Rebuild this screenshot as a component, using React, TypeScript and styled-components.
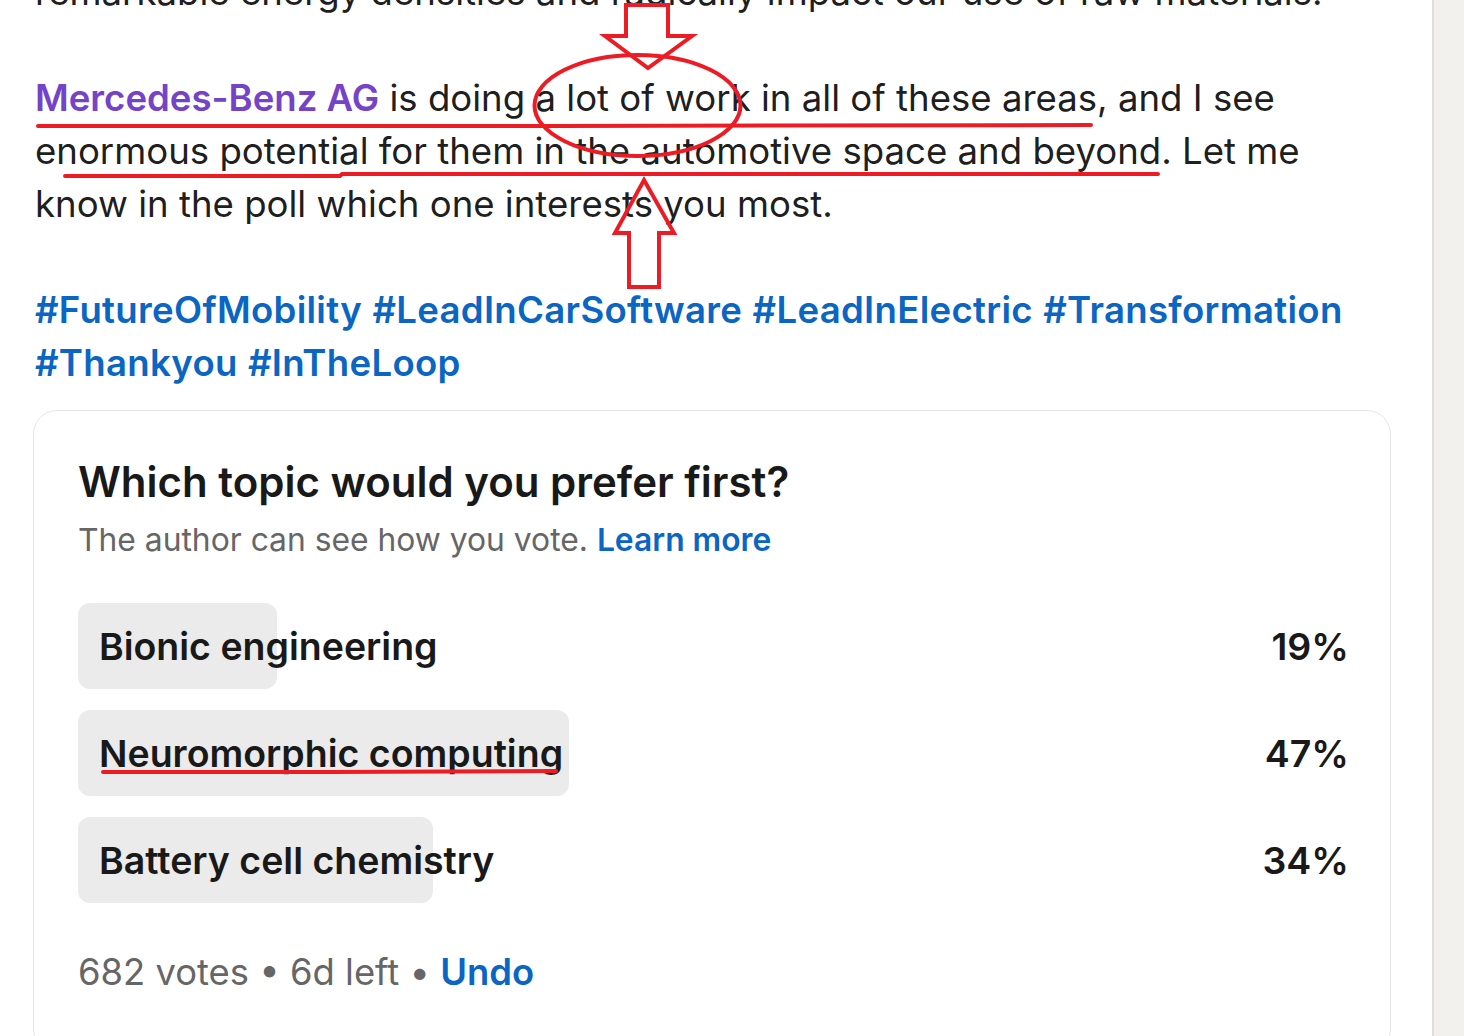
import React from "react";
import styled, { createGlobalStyle } from "styled-components";

const GlobalStyle = createGlobalStyle`
  html, body { margin: 0; padding: 0; background: #ffffff; }
  body { font-family: Inter, "Noto Sans", sans-serif; overflow: hidden; }
  * { box-sizing: border-box; }
`;

const Page = styled.div`
  position: relative;
  display: flex;
  width: 1464px;
  height: 1036px;
  overflow: hidden;
  background: #ffffff;
`;

const Main = styled.main`
  flex: none;
  width: 1432px;
  padding-left: 33px;
`;

const Rail = styled.aside`
  flex: 1;
  background: #f2f1ee;
  border-left: 2px solid #dfdedb;
`;

const Post = styled.div`
  margin-top: -34px;
  padding-left: 2px;
  font-size: 36.6px;
  line-height: 53px;
  color: rgba(0, 0, 0, 0.9);
`;

const Paragraph = styled.p`
  margin: 0 0 53px;
  &:last-child { margin-bottom: 0; }
`;

const Line = styled.span`
  display: block;
  white-space: nowrap;
`;

const Mention = styled.span`
  color: #7443c8;
  font-weight: 600;
`;

const Hashtag = styled.span`
  color: #0a66c2;
  font-weight: 600;
  letter-spacing: 0.3px;
`;

const PollCard = styled.section`
  margin-top: 20px;
  width: 1358px;
  border: 1px solid #e6e6e6;
  border-radius: 24px;
  padding: 46px 41px 60px 44px;
`;

const PollTitle = styled.h2`
  margin: 0;
  font-size: 42px;
  line-height: 50px;
  font-weight: 600;
  color: #191919;
`;

const PollNote = styled.p`
  margin: 13px 0 0;
  font-size: 31.8px;
  line-height: 40px;
  color: #666666;
`;

const BlueLink = styled.span`
  color: #0a66c2;
  font-weight: 600;
`;

const Options = styled.div`
  margin-top: 43px;
  display: grid;
  gap: 21px;
`;

const OptionRow = styled.div`
  position: relative;
  display: flex;
  align-items: center;
  justify-content: space-between;
  height: 86px;
  font-size: 37.5px;
  font-weight: 600;
  color: #191919;
`;

const Fill = styled.div`
  position: absolute;
  left: 0;
  top: 0;
  bottom: 0;
  background: #ebebeb;
  border-radius: 12px;
`;

const OptionLabel = styled.span`
  position: relative;
  padding-left: 21px;
  white-space: nowrap;
`;

const OptionPct = styled.span`
  position: relative;
`;

const PollFooter = styled.p`
  margin: 49px 0 0;
  font-size: 36.4px;
  line-height: 40px;
  color: #666666;
`;

const Marks = styled.svg`
  position: absolute;
  left: 0;
  top: 0;
  pointer-events: none;
`;

const options = [
  { label: "Bionic engineering", pct: 19 },
  { label: "Neuromorphic computing", pct: 47 },
  { label: "Battery cell chemistry", pct: 34 },
];

const TRACK = 1045;
const RED = "#ed1c24";

export default function App() {
  return (
    <Page>
      <GlobalStyle />
      <Main>
        <Post>
          <Paragraph>
            <Line>remarkable energy densities and radically impact our use of raw materials.</Line>
          </Paragraph>
          <Paragraph>
            <Line>
              <Mention>Mercedes-Benz AG</Mention> is doing a lot of work in all of these areas, and I see
            </Line>
            <Line>enormous potential for them in the automotive space and beyond. Let me</Line>
            <Line>know in the poll which one interests you most.</Line>
          </Paragraph>
          <Paragraph>
            <Line>
              <Hashtag>#FutureOfMobility</Hashtag> <Hashtag>#LeadInCarSoftware</Hashtag>{" "}
              <Hashtag>#LeadInElectric</Hashtag> <Hashtag>#Transformation</Hashtag>
            </Line>
            <Line>
              <Hashtag>#Thankyou</Hashtag> <Hashtag>#InTheLoop</Hashtag>
            </Line>
          </Paragraph>
        </Post>
        <PollCard>
          <PollTitle>Which topic would you prefer first?</PollTitle>
          <PollNote>
            The author can see how you vote. <BlueLink>Learn more</BlueLink>
          </PollNote>
          <Options>
            {options.map((o) => (
              <OptionRow key={o.label}>
                <Fill style={{ width: `${(o.pct / 100) * TRACK}px` }} />
                <OptionLabel>{o.label}</OptionLabel>
                <OptionPct>{o.pct}%</OptionPct>
              </OptionRow>
            ))}
          </Options>
          <PollFooter>
            682 votes • 6d left • <BlueLink>Undo</BlueLink>
          </PollFooter>
        </PollCard>
      </Main>
      <Rail />
      <Marks width="1464" height="1036" viewBox="0 0 1464 1036">
        <g fill="none" stroke={RED} strokeWidth="4" strokeLinejoin="miter">
          <polygon points="626,5 668,5 668,36 692,36 648,68 605,36 626,36" />
          <polygon points="644,180 674,233 659,233 659,287 629,287 629,233 615,233" />
          <ellipse cx="637.5" cy="105.5" rx="103" ry="50.5" />
        </g>
        <g fill="none" stroke={RED} strokeWidth="4" strokeLinecap="round">
          <polyline points="38,126 560,126 1091,125" />
          <polyline points="65,176 340,176 342,174 1158,174" />
          <polyline points="103,772 330,772 556,771" />
        </g>
      </Marks>
    </Page>
  );
}
